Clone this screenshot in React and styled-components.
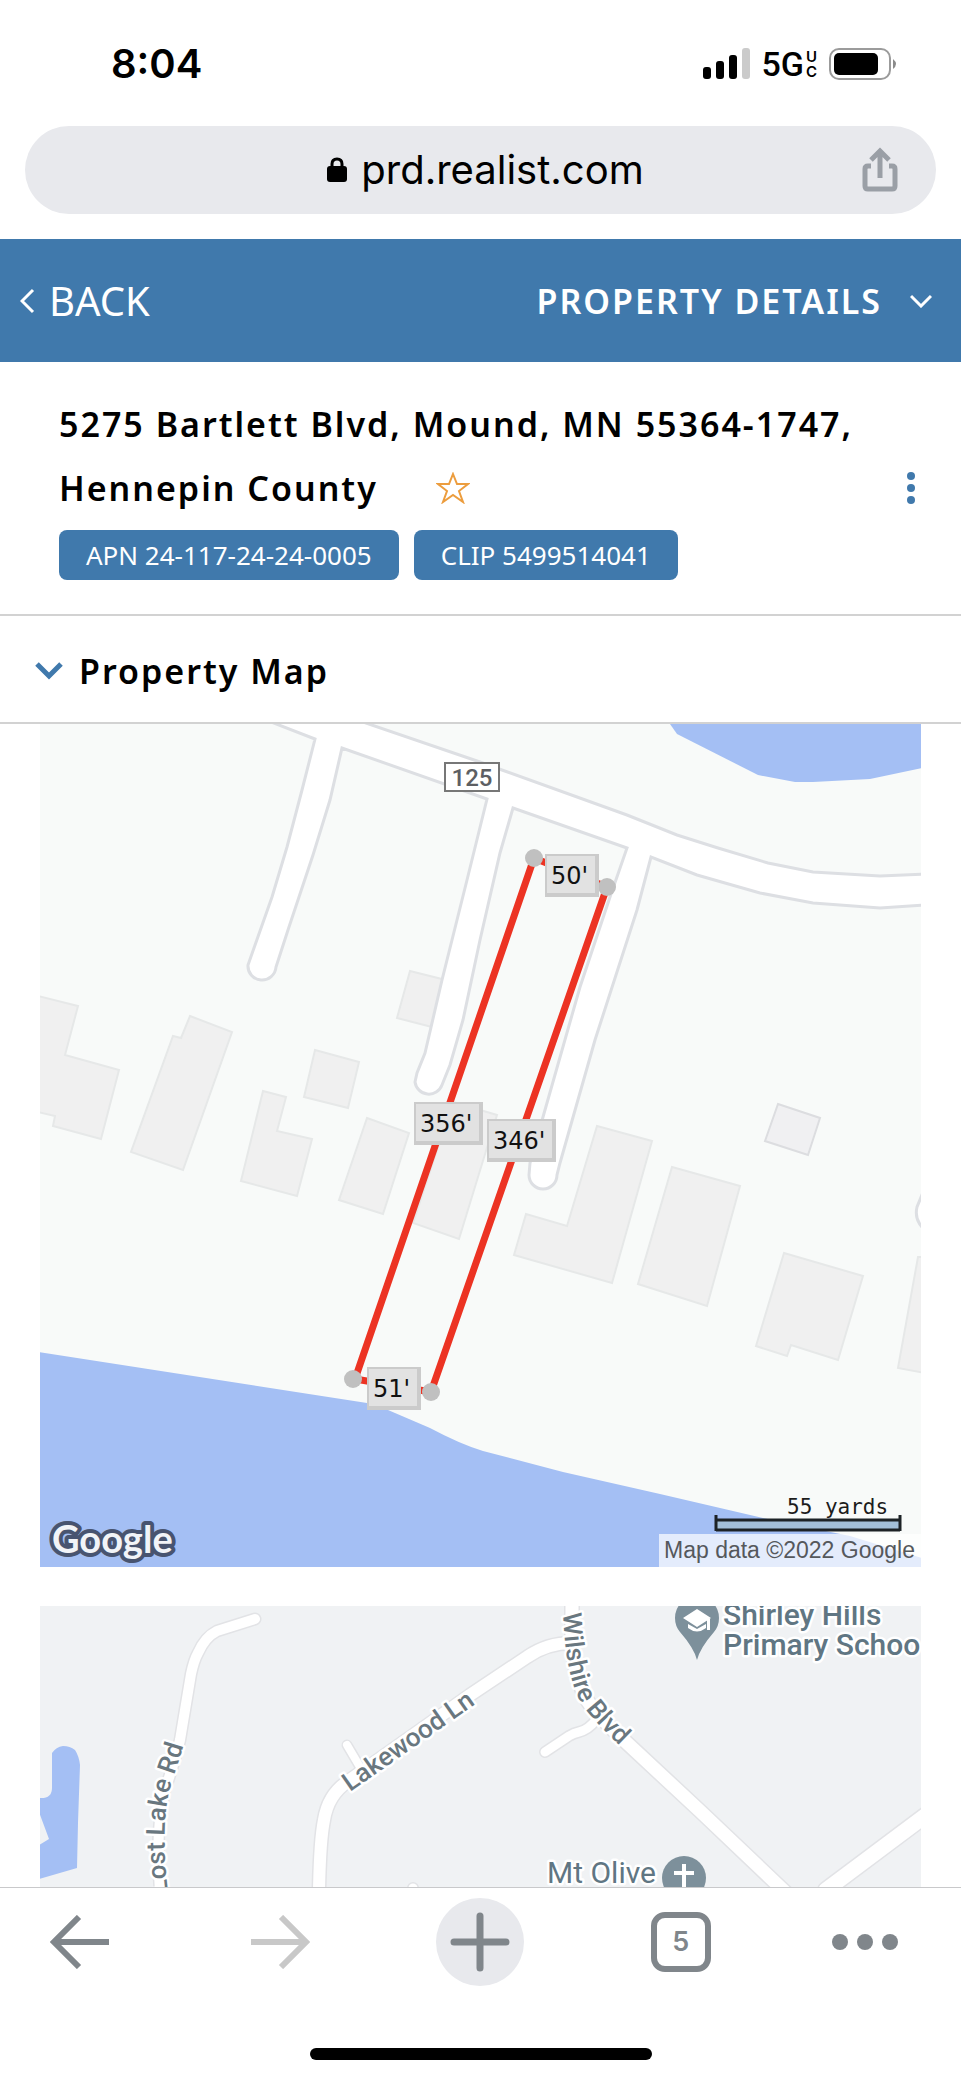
import React from "react";
import styled, { createGlobalStyle } from "styled-components";

const GlobalStyle = createGlobalStyle`
  *, *::before, *::after { box-sizing: border-box; }
  body { margin: 0; background: #fff; color: #000; font-family: "Noto Sans", "Open Sans", sans-serif; }
  button { margin: 0; padding: 0; border: 0; background: none; color: inherit; font: inherit; cursor: pointer; }
  svg { display: block; flex: none; }
`;

const BLUE = "#4079ac";

const Screen = styled.div`
  display: flex;
  flex-direction: column;
  height: 100vh;
`;

const StatusBar = styled.header`
  display: flex;
  align-items: center;
  justify-content: space-between;
  padding: 38px 64px 36px 111px;
  font-family: Inter, sans-serif;
`;

const Clock = styled.time`
  font-size: 40px;
  line-height: 52px;
  font-weight: 600;
`;

const StatusIcons = styled.div`
  display: flex;
  align-items: center;
`;

const Network = styled.span`
  display: flex;
  align-items: center;
  gap: 2px;
  margin: 0 12px 0 10px;
  font: 500 34px/40px Roboto, sans-serif;
`;

const Carrier = styled.span`
  display: flex;
  flex-direction: column;
  font: 600 15px/15px Inter, sans-serif;
`;

const AddressBar = styled.div`
  display: grid;
  grid-template-columns: 1fr auto 1fr;
  align-items: center;
  margin: 0 25px 25px;
  padding: 0 38px 0 48px;
  height: 88px;
  border-radius: 44px;
  background: #e8e9ed;
`;

const SiteButton = styled.button`
  grid-column: 2;
  display: flex;
  align-items: center;
  gap: 14px;
  font: 400 40px/48px Inter, sans-serif;
`;

const ShareButton = styled.button`
  justify-self: end;
`;

const Content = styled.main`
  flex: 1;
  min-height: 0;
  overflow-y: auto;
  scrollbar-width: none;
`;

const TitleBar = styled.nav`
  display: flex;
  align-items: center;
  justify-content: space-between;
  padding: 36px 29px 35px 20px;
  background: ${BLUE};
  color: #fff;
  line-height: 52px;
`;

const BackLink = styled.a`
  display: flex;
  align-items: center;
  gap: 14px;
  color: inherit;
  font-size: 40px;
  text-decoration: none;
`;

const ViewMenu = styled.button`
  display: flex;
  align-items: center;
  gap: 28px;
  font-size: 34px;
  font-weight: 600;
  letter-spacing: 2px;
`;

const Property = styled.section`
  padding: 30px 38px 34px 59px;
  border-bottom: 2px solid #d2d2d2;
`;

const TitleRow = styled.div`
  display: flex;
  align-items: flex-end;
  justify-content: space-between;
`;

const Address = styled.h1`
  margin: 0;
  font-size: 34px;
  line-height: 64px;
  font-weight: 600;
  letter-spacing: 2px;
`;

const StarButton = styled.button`
  display: inline-block;
  margin-left: 58px;
  line-height: 30px;
  vertical-align: -3px;
`;

const MoreButton = styled.button`
  padding: 16px 8px;
`;

const Chips = styled.ul`
  display: flex;
  gap: 15px;
  margin: 10px 0 0;
  padding: 0;
  list-style: none;
`;

const Chip = styled.li`
  padding: 0 27px;
  border-radius: 8px;
  background: ${BLUE};
  color: #fff;
  font-size: 26px;
  line-height: 50px;
`;

const SectionHeader = styled.h2`
  margin: 0;
  border-bottom: 2px solid #d2d2d2;
  font-size: 34px;
  line-height: 46px;
  font-weight: 600;
  letter-spacing: 2px;
`;

const SectionToggle = styled.button`
  display: flex;
  align-items: center;
  gap: 16px;
  width: 100%;
  padding: 32px 35px 28px;
  letter-spacing: inherit;
`;

const Maps = styled.div`
  display: grid;
  gap: 39px;
  padding: 0 40px;
`;

const Map = styled.svg`
  width: 100%;
  height: auto;
`;

const Toolbar = styled.nav`
  display: grid;
  grid-template-columns: 2fr 3fr 2fr 3fr 2fr;
  align-items: center;
  justify-items: center;
  padding: 10px 0;
  border-top: 1px solid #c9c9cb;
`;

const ToolButton = styled.button`
  display: grid;
  place-items: center;
  width: 88px;
  height: 88px;
  border-radius: 50%;
  background: ${(p) => (p.$filled ? "#e8e9ed" : "transparent")};
  color: ${(p) => (p.$dim ? "#c8c8c8" : "#80868b")};
`;

const OverflowButton = styled(ToolButton)`
  margin-right: 32px;
`;

const TabCount = styled.span`
  width: 60px;
  height: 60px;
  border: 6px solid #80868b;
  border-radius: 14px;
  font: 600 27px/48px Inter, sans-serif;
  text-align: center;
`;

const HomeArea = styled.footer`
  display: flex;
  justify-content: center;
  padding: 52px 0 20px;
`;

const HomeIndicator = styled.div`
  width: 342px;
  height: 12px;
  border-radius: 6px;
  background: #000;
`;

const buildings = [
  "38,996 78,1006 65,1055 119,1070 101,1139 53,1126 55,1116 38,1112",
  "190,1016 232,1032 183,1170 131,1152 173,1036 181,1038",
  "315,1050 359,1062 348,1108 304,1097",
  "263,1091 286,1097 277,1131 312,1139 297,1196 241,1181",
  "367,1118 409,1133 383,1214 339,1200",
  "453,1102 497,1115 459,1239 413,1223",
  "410,971 446,980 432,1027 397,1018",
  "597,1126 652,1141 612,1283 514,1255 526,1214 567,1226",
  "672,1167 740,1186 707,1306 638,1284",
  "784,1253 863,1276 838,1360 791,1345 787,1356 756,1346",
  "918,1257 925,1257 925,1373 898,1368",
];

const measures = [
  { x: 545, y: 854, w: 54, label: "50'" },
  { x: 414, y: 1102, w: 69, label: "356'" },
  { x: 487, y: 1119, w: 69, label: "346'" },
  { x: 367, y: 1367, w: 54, label: "51'" },
];

const corners = [[534, 858], [607, 887], [431, 1392], [353, 1379]];

function Measure({ x, y, w, label }) {
  return (
    <g>
      <rect x={x} y={y} width={w} height="43" fill="#cbcbcb" />
      <rect x={x + 2} y={y + 2} width={w - 6} height="37" fill="#e2e2e2" />
      <text x={x + 6} y={y + 30} fontFamily="DejaVu Sans, sans-serif" fontSize="24" fill="#111">{label}</text>
    </g>
  );
}

function ParcelMap() {
  return (
    <Map viewBox="40 724 881 843" role="img" aria-label="Parcel map with lot dimensions">
      <rect x="40" y="724" width="881" height="843" fill="#f8faf9" />
      <path d="M670 724 677 734 758 775 795 782 813 782 870 779 922 768V724Z" fill="#a4bff4" />
      <path d="M39 1352 367 1403 388 1410 430 1428Q460 1444 483 1451L563 1472 660 1494 763 1518 850 1536 922 1558V1568H39Z" fill="#a4bff4" />
      <g fill="#f0f0f0" stroke="#e6e8e8" strokeWidth="2">
        {buildings.map((points) => <polygon key={points} points={points} />)}
        <polygon points="778,1104 820,1118 808,1155 765,1141" fill="#f0f0f2" stroke="#dcdde0" />
      </g>
      <path
        d="M360 721 480 762 502 770 627 815 677 835 718 848 768 863 813 872 880 876 925 874V905L880 908 813 903 760 893 697 875 651 857 637 910 595 1040 560 1163 557 1175A14 14 0 0 1 529 1175L530 1163 543 1117 580 987 610 897 627 848 513 808 500 853 480 940 463 1020 450 1065 442 1085A14 14 0 0 1 415 1082L417 1073 425 1053 442 980 467 880 487 799 342 748 330 800 313 855 288 930 276 967A14 14 0 0 1 248 965L272 897 287 847 302 790 315 739 266 720Z"
        fill="#fff" stroke="#dddfe3" strokeWidth="3"
      />
      <path d="M924 1190 917 1207Q914 1220 924 1229Z" fill="#fff" stroke="#dddfe3" strokeWidth="3" />
      <rect x="445" y="763" width="54" height="28" fill="#fff" stroke="#777" strokeWidth="2" />
      <text x="472" y="786" textAnchor="middle" fontFamily="Roboto, sans-serif" fontSize="24" fontWeight="500" fill="#5d5f63">125</text>
      <path d="M534 858 355 1379 431 1392 607 887Z" fill="none" stroke="#ec3323" strokeWidth="7" />
      {corners.map(([x, y]) => <circle key={x} cx={x} cy={y} r="9" fill="#c0c0c0" />)}
      {measures.map((m) => <Measure key={m.label} {...m} />)}
      <text x="52" y="1553" fontFamily="Lato, sans-serif" fontSize="38" fontWeight="700" fill="#f2f4f8" stroke="#485470" strokeWidth="8" strokeLinejoin="round" paintOrder="stroke">Google</text>
      <rect x="659" y="1534" width="262" height="33" fill="#fff" fillOpacity="0.7" />
      <text x="664" y="1558" fontFamily="Liberation Sans, sans-serif" fontSize="23" fill="#55585c">Map data ©2022 Google</text>
      <rect x="716" y="1520" width="184" height="10" fill="#a3bfd9" />
      <path d="M716 1520H900M716 1530H900M716 1515V1531M900 1515V1531" stroke="#1d2226" strokeWidth="3" />
      <text x="787" y="1514" fontFamily="DejaVu Sans Mono, monospace" fontSize="21" fill="#1c1c1c">55 yards</text>
    </Map>
  );
}

const streets = [
  { w: 10, d: "M255 1619 217 1631Q205 1637 198 1653 194 1660 191 1674L180 1740Q176 1757 165 1790 155 1830 160 1890L170 1960 200 2040" },
  { w: 12, d: "M572 1643Q547 1643 527 1657L470 1695 347 1782Q328 1795 324 1820 320 1840 319 1890L316 2040" },
  { w: 8, d: "M347 1745 360 1767" },
  { w: 9, d: "M545 1752 569 1736Q574 1733 579 1732 588 1730 596 1720" },
  { w: 13, d: "M572 1600V1640Q572 1665 584 1695 592 1711 627 1743L700 1811 781 1888 940 2040" },
  { w: 15, d: "M930 1812 826 1890" },
  { w: 9, d: "M413 1888V1930" },
];

const halo = {
  fontFamily: "Roboto, sans-serif",
  stroke: "#fff",
  strokeWidth: 5,
  strokeLinejoin: "round",
  paintOrder: "stroke",
};

function AreaMap() {
  return (
    <Map viewBox="40 1606 881 420" role="img" aria-label="Neighborhood map">
      <rect x="40" y="1606" width="881" height="420" fill="#f0f2f4" />
      <path d="M52 1753Q56 1747 63 1746 70 1746 75 1750 79 1756 80 1765L78 1823 77 1868 39 1879V1845L49 1839 39 1812V1798Q52 1799 52 1788Z" fill="#a4bff4" />
      <g fill="none" strokeLinecap="round" strokeLinejoin="round">
        {streets.map((s) => <path key={s.d} d={s.d} stroke="#e2e3e6" strokeWidth={s.w + 3} />)}
        {streets.map((s) => <path key={s.d} d={s.d} stroke="#fff" strokeWidth={s.w} />)}
      </g>
      <path id="lost-lake" d="M168 1893C163 1850 163 1810 171 1785 177 1765 182 1755 190 1720" fill="none" />
      <path id="wilshire" d="M563 1613C564 1640 567 1667 575 1690 583 1710 595 1723 650 1774" fill="none" />
      <g {...halo} fontSize="26" fontWeight="500" fill="#69777f">
        <text><textPath href="#lost-lake">Lost Lake Rd</textPath></text>
        <text><textPath href="#wilshire">Wilshire Blvd</textPath></text>
        <text transform="translate(350 1792) rotate(-35)">Lakewood Ln</text>
      </g>
      <g {...halo} fontSize="30" fill="#607683">
        <text x="723" y="1625" fontWeight="500">Shirley Hills</text>
        <text x="723" y="1655" fontWeight="500">Primary Schoo</text>
        <text x="547" y="1883">Mt Olive</text>
      </g>
      <g fill="#7d909b">
        <path d="M697 1660Q694 1648 680 1632 675 1626 675 1618A22 22 0 0 1 719 1618Q719 1626 714 1632 700 1648 697 1660Z" />
        <circle cx="684" cy="1878" r="22" />
      </g>
      <path d="M683 1618 697 1609 711 1618 697 1627ZM688 1624 697 1629 706 1624V1628Q697 1635 688 1628ZM707 1619H710V1630H707Z" fill="#fff" />
      <path d="M684 1864V1896M674 1873H694" stroke="#fff" strokeWidth="4" />
    </Map>
  );
}

export default function App() {
  return (
    <Screen>
      <GlobalStyle />
      <StatusBar>
        <Clock>8:04</Clock>
        <StatusIcons>
          <svg width="48" height="32" aria-label="Signal strength">
            <rect x="0" y="19" width="8" height="12" rx="3" />
            <rect x="13" y="13" width="8" height="18" rx="3" />
            <rect x="26" y="7" width="8" height="24" rx="3" />
            <rect x="39" y="0" width="8" height="31" rx="3" fill="#cbcbcb" />
          </svg>
          <Network>
            5G
            <Carrier><span>U</span><span>C</span></Carrier>
          </Network>
          <svg width="68" height="32" aria-label="Battery">
            <rect x="1" y="1" width="60" height="30" rx="9" fill="none" stroke="#9b9b9b" strokeWidth="2" />
            <rect x="5" y="5" width="44" height="22" rx="5" />
            <path d="M64 11Q70 16 64 21Z" fill="#8b8b8b" />
          </svg>
        </StatusIcons>
      </StatusBar>

      <AddressBar>
        <SiteButton>
          <svg width="20" height="26" aria-hidden="true">
            <rect y="9" width="20" height="16" rx="3" />
            <path d="M5 11V7Q5 2 10 2T15 7V11" fill="none" stroke="#000" strokeWidth="3" />
          </svg>
          prd.realist.com
        </SiteButton>
        <ShareButton aria-label="Share">
          <svg width="36" height="46" fill="none" stroke="#9a9fa6" strokeWidth="5">
            <path d="M9 19H6Q3 19 3 22V39Q3 42 6 42H30Q33 42 33 39V22Q33 19 30 19H27" />
            <path d="M18 31V4M9 13 18 4 27 13" />
          </svg>
        </ShareButton>
      </AddressBar>

      <Content>
        <TitleBar>
          <BackLink href="#back">
            <svg width="15" height="26" fill="none" stroke="#fff" strokeWidth="3" aria-hidden="true">
              <path d="M13 2 2 13 13 24" />
            </svg>
            BACK
          </BackLink>
          <ViewMenu>
            PROPERTY DETAILS
            <svg width="22" height="14" fill="none" stroke="#fff" strokeWidth="3" aria-hidden="true">
              <path d="M1 2 11 12 21 2" />
            </svg>
          </ViewMenu>
        </TitleBar>

        <Property>
          <TitleRow>
            <Address>
              5275 Bartlett Blvd, Mound, MN 55364-1747, Hennepin County
              <StarButton aria-label="Save property">
                <svg width="34" height="32" fill="none" stroke="#ec9d3e" strokeWidth="2">
                  <path d="M17 2 21 12 32 12 23 19 27 30 17 23 7 30 11 19 2 12 13 12Z" />
                </svg>
              </StarButton>
            </Address>
            <MoreButton aria-label="More actions">
              <svg width="8" height="32" fill={BLUE}>
                <circle cx="4" cy="4" r="4" />
                <circle cx="4" cy="16" r="4" />
                <circle cx="4" cy="28" r="4" />
              </svg>
            </MoreButton>
          </TitleRow>
          <Chips>
            <Chip>APN 24-117-24-24-0005</Chip>
            <Chip>CLIP 5499514041</Chip>
          </Chips>
        </Property>

        <section>
          <SectionHeader>
            <SectionToggle aria-expanded="true">
              <svg width="28" height="18" fill="none" stroke={BLUE} strokeWidth="5" aria-hidden="true">
                <path d="M2 2 14 14 26 2" />
              </svg>
              Property Map
            </SectionToggle>
          </SectionHeader>
          <Maps>
            <ParcelMap />
            <AreaMap />
          </Maps>
        </section>
      </Content>

      <Toolbar aria-label="Browser">
        <ToolButton aria-label="Back">
          <svg width="60" height="54" fill="none" stroke="currentColor" strokeWidth="6">
            <path d="M59 27H5M29 2 4 27 29 52" />
          </svg>
        </ToolButton>
        <ToolButton aria-label="Forward" $dim>
          <svg width="60" height="54" fill="none" stroke="currentColor" strokeWidth="6">
            <path d="M1 27H55M31 2 56 27 31 52" />
          </svg>
        </ToolButton>
        <ToolButton aria-label="New tab" $filled>
          <svg width="60" height="60" fill="none" stroke="currentColor" strokeWidth="7" strokeLinecap="round">
            <path d="M4 30H56M30 4V56" />
          </svg>
        </ToolButton>
        <ToolButton aria-label="Open tabs">
          <TabCount>5</TabCount>
        </ToolButton>
        <OverflowButton aria-label="Menu">
          <svg width="66" height="16" fill="currentColor">
            <circle cx="8" cy="8" r="8" />
            <circle cx="33" cy="8" r="8" />
            <circle cx="58" cy="8" r="8" />
          </svg>
        </OverflowButton>
      </Toolbar>
      <HomeArea><HomeIndicator /></HomeArea>
    </Screen>
  );
}
